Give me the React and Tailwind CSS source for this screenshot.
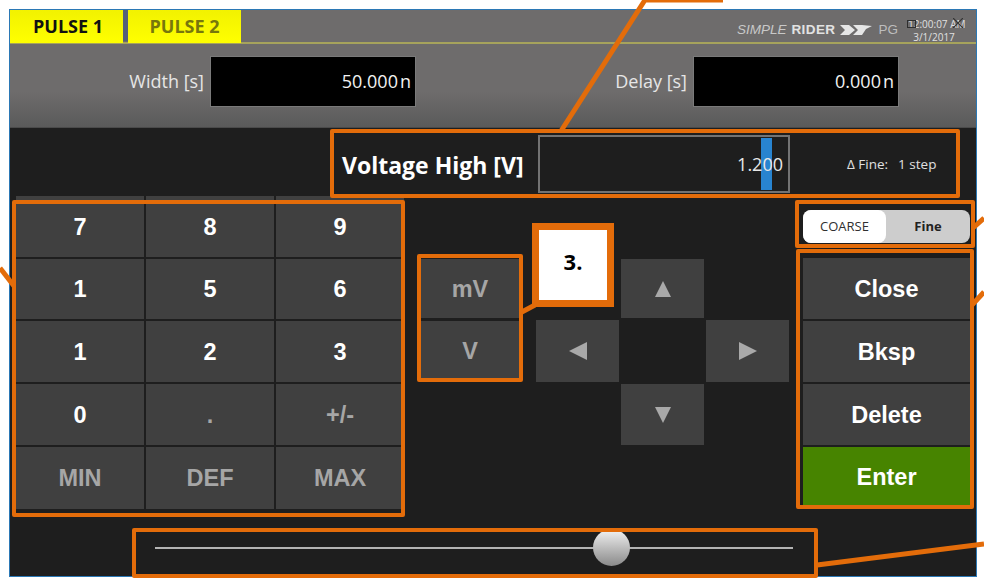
const keys = [
  ["7", "8", "9"],
  ["1", "5", "6"],
  ["1", "2", "3"],
  ["0", ".", "+/-"],
  ["MIN", "DEF", "MAX"],
];

const KeyButton = ({ label, dim, className = "" }) => (
  <div
    className={`flex items-center justify-center bg-[#404040] pt-[2px] font-['Liberation_Sans',sans-serif] text-[23.5px] font-bold ${
      dim ? "text-[#a6a6a6]" : "text-white"
    } ${className}`}
  >
    {label}
  </div>
);

const ArrowButton = ({ points, className = "" }) => (
  <div className={`flex items-center justify-center bg-[#404040] ${className}`}>
    <svg width="18" height="18" viewBox="0 0 18 18">
      <polygon points={points} fill="#a9a9a9" />
    </svg>
  </div>
);

const ValueField = ({ label, value }) => (
  <div className="flex items-center gap-[6px]">
    <span className="text-[18px] text-[#e6e6e6]">{label}</span>
    <div className="flex h-[51px] w-[206px] items-center justify-end border border-[#7a7a7a] bg-black pr-[4px] text-[18px] text-[#f2f2f2]">
      {value}
      <span className="ml-[2px]">n</span>
    </div>
  </div>
);

const Logo = () => (
  <div className="flex items-center font-['Liberation_Sans',sans-serif] text-[13.5px] text-[#c8c8c8]">
    <span className="italic">SIMPLE</span>
    <span className="ml-[5px] font-bold tracking-[0.4px] text-[#e2e2e2]">RIDER</span>
    <svg className="ml-[5px]" width="32" height="12" viewBox="0 0 32 12">
      <polygon points="0,1 9,1 15,6 9,11 0,11 5,6" fill="#e6e6e6" />
      <polygon points="13,1 22,1 32,2 26,5 22,11 13,11 18,6" fill="#e6e6e6" />
    </svg>
    <span className="ml-[6px] text-[#bdbdbd]">PG</span>
  </div>
);

// anotacoes laranja por cima da tela
const Callout = ({ className = "" }) => (
  <div className={`absolute rounded-[2px] border-[4px] border-[#e36c0a] ${className}`} />
);

export default function App() {
  return (
    <div className="relative h-[585px] w-[984px] overflow-hidden bg-white font-['Open_Sans',sans-serif]">
      <div className="ml-[9px] mt-[9px] flex h-[568px] w-[968px] flex-col border border-[#2b78b5] bg-[#1e1e1e]">
        <header className="h-[118px] shrink-0 border-b border-[#4a4a4a] bg-gradient-to-b from-[#6e6c6c] from-70% to-[#5a5a5a]">
          <div className="flex h-[34px] items-start justify-between border-b-2 border-[#a6a35c]">
            <div className="flex h-[33px]">
              <div className="flex w-[113px] items-center justify-center bg-gradient-to-b from-[#f2f200] to-[#ffff00] pl-[3px] text-[18px] font-bold text-[#111111]">
                PULSE 1
              </div>
              <div className="h-[31px] w-[5px] bg-[#55607a]" />
              <div className="flex w-[113px] items-center justify-center bg-gradient-to-b from-[#f2f200] to-[#ffff00] text-[18px] font-bold text-[#77770c]">
                PULSE 2
              </div>
            </div>
            <div className="mr-[16px] mt-[10px] flex items-start">
              <Logo />
              <div className="relative ml-[10px] mt-[-2px] w-[52px] text-center text-[10px] leading-[13px] text-[#e0e0e0]">
                <div className="whitespace-nowrap">12:00:07 AM</div>
                <div>3/1/2017</div>
                <svg className="absolute left-[-1px] top-[2px]" width="9" height="8" viewBox="0 0 9 8" fill="none" stroke="#2e2e2e">
                  <rect x="0.5" y="0.5" width="8" height="7" />
                </svg>
                <svg className="absolute right-[-3px] top-[0px]" width="10" height="10" viewBox="0 0 10 10" fill="none" stroke="#333333" strokeWidth="1.2">
                  <path d="M0 0 L10 10 M10 0 L0 10" />
                </svg>
              </div>
            </div>
          </div>
          <div className="flex pt-[12px]">
            <div className="flex w-[406px] justify-end">
              <ValueField label="Width [s]" value="50.000" />
            </div>
            <div className="flex w-[483px] justify-end">
              <ValueField label="Delay [s]" value="0.000" />
            </div>
          </div>
        </header>

        <div className="flex h-[68px] shrink-0 items-center pl-[332px] pt-[4px]">
          <span className="mt-[2px] w-[196px] whitespace-nowrap text-[23px] font-bold text-white">Voltage High [V]</span>
          <div className="relative flex h-[58px] w-[252px] items-center justify-end border-2 border-[#737373] pr-[5px] text-[18px] text-[#e8e8e8]">
            <span className="absolute right-[16px] top-[1px] h-[52px] w-[11px] bg-[#2884d0]" />
            <span className="relative">1.200</span>
          </div>
          <span className="ml-[57px] text-[13.5px] text-[#e0e0e0]">Δ Fine:</span>
          <span className="ml-[10px] text-[13.5px] text-[#e0e0e0]">1 step</span>
        </div>

        <div className="flex h-[312px] shrink-0 pl-[6px]">
          <div className="grid h-[313px] w-[388px] grid-cols-[128px_128px_128px] grid-rows-[61px_60px_61px_61px_62px] gap-[2px]">
            {keys.map((row, r) =>
              row.map((label, c) => (
                <KeyButton key={`${r}-${c}`} label={label} dim={r === 4 || label === "." || label === "+/-"} />
              ))
            )}
          </div>

          <div className="ml-[17px] flex w-[98px] flex-col gap-[3px] pt-[63px]">
            <KeyButton label="mV" dim className="h-[59px]" />
            <KeyButton label="V" dim className="h-[60px]" />
          </div>

          <div className="ml-[17px] mt-[63px] grid h-[186px] w-[253px] grid-cols-[83px_83px_83px] grid-rows-[59px_62px_61px] gap-x-[2px] gap-y-[2px]">
            <div />
            <ArrowButton points="9,1 17,17 1,17" />
            <div />
            <ArrowButton points="0,9 18,0 18,18" />
            <div />
            <ArrowButton points="18,9 0,0 0,18" />
            <div />
            <ArrowButton points="9,17 17,1 1,1" />
            <div />
          </div>

          <div className="ml-[14px] flex w-[167px] flex-col">
            <div className="mt-[14px] flex h-[33px] rounded-[8px] bg-[#cdcdcd] text-[13px] text-[#303030]">
              <div className="flex w-[83px] items-center justify-center rounded-[8px] bg-white">COARSE</div>
              <div className="flex flex-1 items-center justify-center font-bold text-[#222222]">Fine</div>
            </div>
            <div className="mt-[15px] grid grid-rows-[61px_61px_61px_59px] gap-[2px]">
              <KeyButton label="Close" />
              <KeyButton label="Bksp" />
              <KeyButton label="Delete" />
              <KeyButton label="Enter" className="!bg-[#478400]" />
            </div>
          </div>
        </div>

        <div className="relative ml-[145px] mt-[39px] h-[2px] w-[638px] bg-[#b4b4b4]">
          <div className="absolute left-[438px] top-[-18px] h-[37px] w-[37px] rounded-full bg-gradient-to-b from-[#f4f4f4] to-[#8a8a8a]" />
        </div>
      </div>

      <Callout className="left-[330px] top-[129px] h-[69px] w-[630px]" />
      <Callout className="left-[12px] top-[200px] h-[317px] w-[393px]" />
      <Callout className="left-[417px] top-[254px] h-[128px] w-[106px]" />
      <Callout className="left-[795px] top-[200px] h-[48px] w-[180px]" />
      <Callout className="left-[796px] top-[249px] h-[260px] w-[178px]" />
      <Callout className="left-[132px] top-[528px] h-[50px] w-[686px]" />

      <svg className="absolute inset-0" width="984" height="585" viewBox="0 0 984 585" fill="none" stroke="#e36c0a" strokeWidth="5">
        <path d="M561 131 L645 0 H723" />
        <path d="M520 313 L535 305" />
        <path d="M0 268 L14 286" />
        <path d="M973 228 L984 218" />
        <path d="M972 305 L984 292" />
        <path d="M817 565 L984 544" />
      </svg>

      <div className="absolute left-[532px] top-[223px] flex h-[84px] w-[82px] items-center justify-center border-[7px] border-[#e36c0a] bg-white pb-[8px] text-[22px] font-bold text-black">
        3.
      </div>
    </div>
  );
}
